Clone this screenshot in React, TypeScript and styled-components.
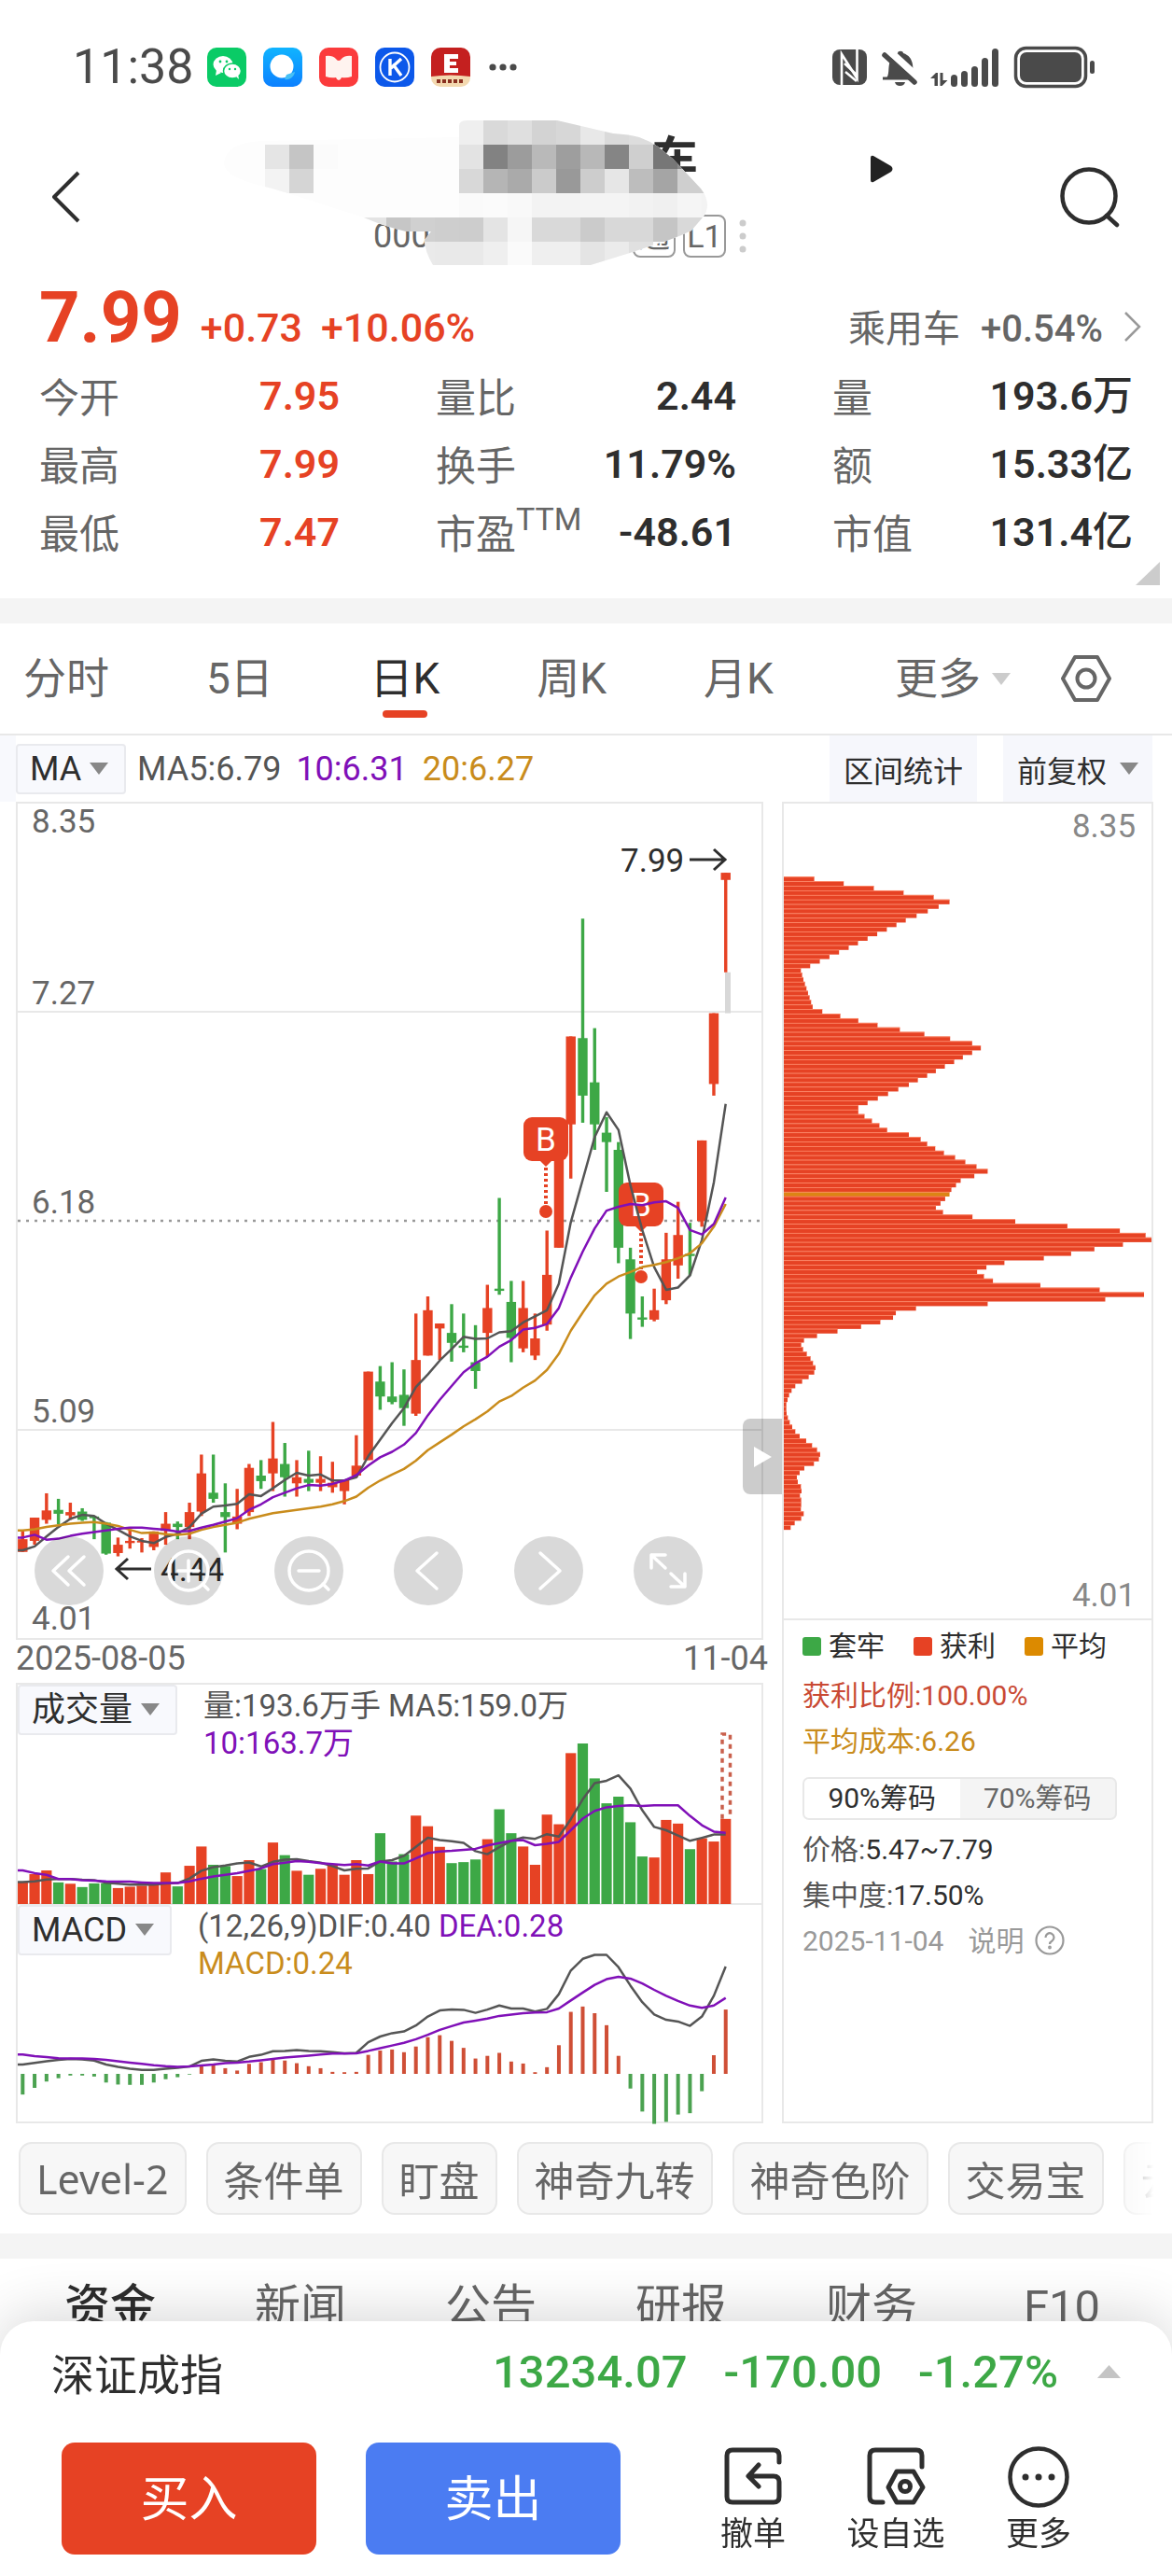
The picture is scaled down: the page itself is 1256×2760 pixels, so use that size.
import React from "react";
import styled, { createGlobalStyle, css } from "styled-components";

const RED = "#e64224";
const GREEN = "#3da846";
const PURPLE = "#8010b8";
const GOLD = "#c98c1c";
const INK = "#2e2e2e";
const GREY = "#666666";
const LINE = "#e8e8e8";
const DARK_LINE = "#555555";

const UI = `Roboto, "Noto Sans CJK SC", sans-serif`;

const GlobalStyle = createGlobalStyle`
  * { box-sizing: border-box; }
  body { margin: 0; background: #ffffff; color: ${INK}; font-family: ${UI}; }
  button, select { font: inherit; color: inherit; border: 0; background: none; padding: 0; margin: 0; }
  svg { display: block; flex: none; }
  a { color: inherit; text-decoration: none; }
`;

/* ---------- data ---------- */

type Candle = [up: 0 | 1, high: number, top: number, bottom: number, low: number];

/* Levels count down from the top of the price plot; 1512 levels span 8.35 to 4.01. */
const LEVELS = 1512;
const candles: Candle[] = [
  [1, 1315, 1330, 1353, 1353], [1, 1291, 1291, 1333, 1340], [1, 1247, 1278, 1295, 1302], [0, 1257, 1277, 1284, 1303],
  [1, 1264, 1281, 1287, 1295], [0, 1274, 1280, 1295, 1297], [0, 1289, 1289, 1292, 1330], [0, 1299, 1300, 1356, 1358],
  [1, 1327, 1340, 1355, 1361], [1, 1312, 1333, 1337, 1347], [1, 1328, 1333, 1336, 1354], [1, 1316, 1316, 1344, 1350],
  [1, 1281, 1302, 1315, 1340], [0, 1298, 1302, 1308, 1330], [1, 1264, 1281, 1308, 1330], [1, 1177, 1211, 1280, 1288],
  [0, 1177, 1246, 1257, 1264], [0, 1229, 1281, 1290, 1354], [1, 1239, 1289, 1302, 1312], [1, 1194, 1201, 1281, 1288],
  [0, 1187, 1215, 1225, 1239], [1, 1118, 1184, 1211, 1243], [0, 1156, 1194, 1218, 1253], [1, 1187, 1218, 1229, 1253],
  [0, 1170, 1221, 1228, 1243], [1, 1180, 1221, 1228, 1243], [1, 1190, 1228, 1236, 1246], [1, 1222, 1222, 1243, 1267],
  [1, 1142, 1197, 1215, 1218], [1, 1027, 1027, 1187, 1187], [0, 1017, 1045, 1072, 1096], [0, 1010, 1072, 1082, 1086],
  [0, 1023, 1069, 1093, 1125], [1, 922, 1006, 1103, 1107], [1, 891, 916, 998, 998], [1, 940, 940, 949, 1006],
  [0, 905, 957, 975, 1009], [0, 922, 980, 984, 992], [0, 943, 1010, 1026, 1058], [1, 870, 912, 957, 1000],
  [0, 713, 877, 881, 888], [0, 863, 901, 966, 1010], [1, 863, 912, 985, 992], [1, 922, 967, 998, 1006],
  [1, 772, 852, 942, 953], [1, 640, 640, 803, 803], [1, 421, 421, 580, 678], [0, 208, 424, 528, 577],
  [0, 406, 504, 580, 626], [0, 567, 595, 612, 702], [0, 612, 626, 803, 831], [0, 803, 824, 922, 968],
  [0, 891, 929, 933, 946], [1, 877, 916, 933, 936], [1, 776, 824, 898, 905], [1, 720, 780, 835, 859],
  [0, 758, 814, 818, 853], [1, 609, 609, 755, 765], [1, 379, 379, 507, 528], [1, 125, 125, 138, 305],
];
const ma5 = [1350, 1343, 1325, 1308, 1293, 1286, 1288, 1302, 1313, 1325, 1333, 1337, 1326, 1320, 1308, 1284, 1271, 1269, 1266, 1249, 1252, 1238, 1223, 1210, 1215, 1213, 1224, 1224, 1218, 1180, 1150, 1120, 1093, 1055, 1032, 1007, 986, 964, 968, 967, 956, 954, 938, 927, 916, 868, 757, 680, 603, 558, 590, 690, 771, 838, 879, 875, 853, 789, 685, 543];
const ma10 = [1327, 1322, 1331, 1329, 1324, 1320, 1317, 1314, 1311, 1309, 1309, 1311, 1313, 1316, 1315, 1309, 1304, 1298, 1292, 1277, 1267, 1254, 1246, 1238, 1232, 1233, 1230, 1224, 1214, 1197, 1182, 1172, 1159, 1138, 1106, 1078, 1053, 1028, 1012, 1000, 982, 970, 951, 948, 941, 912, 857, 810, 768, 736, 729, 724, 726, 721, 719, 731, 771, 779, 760, 712];
const ma20 = [1314, 1312, 1308, 1305, 1302, 1300, 1299, 1302, 1306, 1313, 1319, 1318, 1321, 1322, 1320, 1313, 1308, 1304, 1300, 1293, 1288, 1283, 1280, 1277, 1274, 1271, 1267, 1261, 1253, 1237, 1224, 1213, 1203, 1188, 1169, 1155, 1141, 1126, 1113, 1099, 1081, 1071, 1056, 1043, 1024, 995, 953, 920, 889, 868, 855, 847, 838, 834, 829, 822, 813, 795, 765, 724];

/* Volume panel: 660 levels from its top to the base line. */
const VOLUME_LEVELS = 660;
const volumes = [67, 90, 101, 65, 61, 51, 62, 62, 48, 52, 55, 58, 95, 53, 115, 173, 118, 114, 84, 132, 105, 185, 147, 100, 88, 106, 118, 88, 132, 90, 213, 128, 150, 266, 234, 172, 123, 126, 134, 195, 285, 213, 173, 118, 269, 240, 454, 483, 378, 303, 323, 246, 143, 140, 253, 242, 165, 198, 188, 256];
const volMa5 = [66, 68, 74, 75, 75, 73, 72, 64, 61, 58, 58, 58, 62, 63, 77, 100, 111, 116, 122, 125, 113, 127, 133, 135, 129, 124, 114, 101, 106, 107, 128, 132, 145, 172, 199, 192, 189, 184, 159, 150, 171, 190, 200, 196, 210, 203, 255, 315, 364, 371, 387, 347, 282, 232, 222, 206, 190, 199, 209, 209];
const volMa10 = [101, 93, 88, 75, 75, 72, 70, 68, 67, 67, 65, 63, 63, 63, 68, 76, 83, 88, 93, 100, 107, 120, 124, 129, 127, 123, 120, 117, 120, 116, 128, 122, 122, 137, 153, 158, 160, 163, 166, 176, 183, 190, 192, 177, 181, 187, 222, 257, 280, 291, 295, 297, 295, 297, 297, 297, 265, 237, 218, 214];

/* MACD panel: offsets from the zero line, up is positive. */
const macd = [-62, -42, -23, -13, -5, -5, -8, -26, -32, -33, -33, -26, -16, -10, -2, 25, 28, 17, 10, 30, 35, 44, 40, 32, 23, 17, 6, 5, 6, 57, 70, 73, 65, 82, 110, 116, 99, 78, 46, 54, 63, 37, 31, 5, 20, 86, 186, 202, 182, 146, 54, -44, -113, -150, -144, -122, -118, -52, 56, 193];
const dif = [28, 33, 38, 42, 45, 43, 40, 28, 21, 15, 12, 12, 15, 18, 22, 39, 43, 39, 37, 51, 57, 68, 69, 71, 69, 68, 65, 62, 63, 95, 112, 122, 127, 145, 172, 190, 193, 192, 183, 193, 205, 196, 196, 187, 195, 239, 310, 345, 357, 357, 320, 265, 215, 178, 162, 157, 144, 172, 234, 322];
const dea = [58, 53, 50, 47, 46, 46, 45, 42, 38, 34, 30, 26, 23, 21, 22, 25, 28, 32, 34, 37, 41, 45, 49, 52, 55, 58, 61, 61, 62, 69, 77, 85, 93, 104, 117, 132, 143, 154, 160, 166, 174, 178, 182, 184, 185, 196, 220, 244, 267, 284, 291, 286, 271, 252, 234, 219, 205, 198, 205, 228];

/* Width of every price step in the cost distribution, from high to low price. */
const chips = [98, 193, 290, 386, 483, 534, 499, 464, 428, 393, 363, 332, 301, 270, 239, 209, 178, 147, 116, 85, 55, 59, 63, 68, 73, 78, 83, 88, 93, 124, 182, 240, 302, 374, 453, 536, 607, 635, 607, 577, 549, 519, 490, 462, 432, 403, 369, 336, 303, 270, 240, 240, 260, 284, 308, 333, 403, 441, 462, 488, 516, 552, 585, 621, 657, 614, 570, 555, 540, 534, 520, 505, 490, 513, 608, 746, 914, 1083, 1166, 1185, 1093, 1001, 926, 838, 711, 653, 623, 645, 674, 827, 1018, 1161, 1036, 657, 426, 361, 352, 311, 249, 173, 107, 65, 56, 62, 74, 86, 94, 102, 98, 80, 59, 37, 25, 17, 12, 8, 8, 9, 13, 19, 27, 37, 51, 72, 91, 107, 117, 113, 97, 66, 51, 42, 45, 55, 57, 52, 56, 56, 55, 64, 56, 35, 22];
const AVERAGE_STEP = 69;

const STEP = 12.77;
const cx = (i: number) => 5.3 + i * STEP;
const path = (values: number[], y: (v: number) => number) =>
  `M0 ${y(values[0]).toFixed(1)} ` + values.map((v, i) => `L${cx(i).toFixed(1)} ${y(v).toFixed(1)}`).join(" ");

/* ---------- page frame ---------- */

const Page = styled.div`
  min-height: 100vh;
  padding-bottom: 240px;
  overflow: hidden;
  background: #fff;
`;

const StatusBar = styled.header`
  height: 144px;
  padding: 0 82px 0 78px;
  display: flex;
  align-items: center;
  justify-content: space-between;
  color: #4a4a4a;
`;
const StatusGroup = styled.div`
  display: flex;
  align-items: center;
  gap: 14px;
`;
const Clock = styled.span`
  font-size: 52px;
  line-height: 60px;
`;

const Header = styled.div`
  position: relative;
  height: 134px;
  padding: 0 56px;
  display: flex;
  align-items: center;
`;
const IconButton = styled.button`
  display: flex;
`;
const TitleBlock = styled.div`
  flex: 1;
  display: flex;
  flex-direction: column;
  gap: 34px;
`;
const TitleRow = styled.h1`
  margin: 0;
  padding: 0 176px 0 612px;
  display: flex;
  align-items: flex-end;
  justify-content: space-between;
  font-size: 50px;
  line-height: 50px;
  font-weight: 700;
`;
const CodeRow = styled.div`
  padding-left: 314px;
  display: flex;
  align-items: center;
  font-size: 36px;
  line-height: 46px;
  color: ${GREY};
`;
const Code = styled.span`
  width: 278px;
`;
const Tag = styled.span`
  height: 46px;
  width: 46px;
  margin-right: 8px;
  border: 2px solid #999;
  border-radius: 8px;
  font-size: 34px;
  line-height: 42px;
  text-align: center;
`;
const Mosaic = styled.svg`
  position: absolute;
  left: 230px;
  top: -19px;
`;

/* ---------- quote ---------- */

const Quote = styled.section`
  position: relative;
  padding: 14px 42px 34px;
`;
const PriceRow = styled.div`
  display: flex;
  align-items: baseline;
  height: 96px;
  line-height: 96px;
  margin-right: -10px;
  color: ${RED};
`;
const Price = styled.strong`
  font-size: 76px;
  margin-right: 20px;
`;
const Change = styled.span`
  font-size: 43px;
  font-weight: 500;
  margin-right: 20px;
`;
const Sector = styled.a`
  margin-left: auto;
  display: flex;
  align-items: baseline;
  gap: 22px;
  color: ${GREY};
  font-size: 40px;
`;
const SectorChange = styled.span`
  font-weight: 500;
`;
const QuoteGrid = styled.dl`
  margin: 0;
  display: grid;
  grid-template-columns: repeat(3, 1fr);
  column-gap: 103px;
`;
const QuoteItem = styled.div`
  display: flex;
  justify-content: space-between;
  align-items: center;
  height: 73px;
  font-size: 43px;
  white-space: nowrap;
`;
const Term = styled.dt`
  display: flex;
  padding-bottom: 4px;
  color: ${GREY};
`;
const Super = styled.span`
  font-size: 34px;
  line-height: 36px;
`;
const Value = styled.dd<{ $color?: string }>`
  margin: 0;
  font-size: 43px;
  line-height: 73px;
  font-weight: 600;
  color: ${(p) => p.$color ?? INK};
`;
const Unit = styled.span`
  font-weight: 500;
`;
const Corner = styled.svg`
  position: absolute;
  right: 13px;
  bottom: 14px;
`;
const Band = styled.div`
  height: 27px;
  background: #f4f4f4;
`;

/* ---------- period tabs ---------- */

const Periods = styled.nav`
  height: 120px;
  padding: 0 65px 0 25px;
  display: flex;
  align-items: center;
  border-bottom: 2px solid ${LINE};
  color: ${GREY};
`;
const PeriodList = styled.div`
  flex: 0 1 804px;
  display: flex;
  justify-content: space-between;
`;
const Period = styled.button<{ $active?: boolean }>`
  position: relative;
  font-size: 46px;
  line-height: 60px;
  ${(p) =>
    p.$active &&
    css`
      color: ${INK};
      &::after {
        content: "";
        position: absolute;
        left: 50%;
        bottom: -12px;
        width: 48px;
        height: 8px;
        margin-left: -24px;
        border-radius: 4px;
        background: ${RED};
      }
    `}
`;
const MoreButton = styled.button`
  margin-left: auto;
  margin-right: 54px;
  display: flex;
  align-items: center;
  gap: 12px;
  font-size: 46px;
  line-height: 60px;
`;

/* ---------- indicator bar ---------- */

const Picker = styled.label`
  position: relative;
  display: inline-flex;
  align-items: center;
  height: 54px;
  border: 2px solid #e9eaee;
  border-radius: 4px;
  background: #f8f9fd;
  &::after {
    content: "";
    position: absolute;
    right: 17px;
    top: 18px;
    border: 10px solid transparent;
    border-top: 13px solid #888;
    border-bottom: 0;
    pointer-events: none;
  }
`;
const PickerSelect = styled.select`
  appearance: none;
  padding: 0 45px 0 13px;
  font-size: 36px;
  line-height: 50px;
  height: 50px;
`;
const IndicatorBar = styled.div`
  height: 71px;
  padding: 0 21px 0 0;
  display: flex;
  align-items: center;
  &::before {
    content: "";
    width: 17px;
    height: 71px;
    background: #f8f9fd;
  }
`;
const Readout = styled.div`
  font-size: 36px;
  line-height: 46px;
  margin-left: 12px;
  display: flex;
  gap: 16px;
`;
const Tone = styled.span<{ $color: string }>`
  color: ${(p) => p.$color};
`;
const BarButton = styled.button<{ $push?: boolean }>`
  height: 71px;
  padding: 0 15px;
  margin-left: ${(p) => (p.$push ? "auto" : "28px")};
  background: #f6f7fc;
  font-size: 32px;
  display: flex;
  align-items: center;
  gap: 14px;
`;

/* ---------- charts ---------- */

const Charts = styled.main`
  position: relative;
  display: grid;
  grid-template-columns: 801fr 398fr;
  column-gap: 20px;
  padding: 0 20px 0 17px;
`;
const Column = styled.div`
  min-width: 0;
`;
const PlotBox = styled.div`
  position: relative;
  border: 2px solid ${LINE};
`;
const Plot = styled.svg`
  width: 100%;
  height: auto;
  font-family: ${UI};
`;
const DateRow = styled.div`
  height: 46px;
  display: flex;
  justify-content: space-between;
  margin-right: -5px;
  font-size: 36px;
  line-height: 40px;
  color: ${GREY};
`;
const SubPanel = styled.section`
  display: grid;
  height: 236px;
  border: 2px solid ${LINE};
  border-bottom: 0;
  & > * {
    grid-area: 1 / 1;
  }
  & + & {
    border-bottom: 2px solid ${LINE};
  }
`;
const SubHead = styled.div`
  display: flex;
  align-items: flex-start;
  gap: 28px;
`;
const SubReadout = styled.div`
  padding-top: 3px;
  font-size: 33px;
  line-height: 40px;
`;
const FloatTools = styled.div`
  position: absolute;
  left: 18px;
  right: 63px;
  bottom: 35px;
  display: flex;
  justify-content: space-between;
`;
const FloatButton = styled.button`
  width: 74px;
  height: 74px;
  border-radius: 37px;
  background: rgba(0, 0, 0, 0.15);
  display: flex;
  align-items: center;
  justify-content: center;
`;
const CollapseButton = styled.button`
  position: absolute;
  right: -22px;
  top: 659px;
  width: 42px;
  height: 81px;
  border-radius: 8px 0 0 8px;
  background: rgba(0, 0, 0, 0.2);
  display: flex;
  align-items: center;
  justify-content: center;
`;

const ChipPanel = styled.aside`
  border: 2px solid ${LINE};
  display: flex;
  flex-direction: column;
`;
const ChipInfo = styled.div`
  border-top: 2px solid ${LINE};
  padding: 0 20px;
  font-size: 30px;
  line-height: 49px;
`;
const Legend = styled.ul`
  list-style: none;
  margin: 0;
  padding: 0;
  display: flex;
  gap: 31px;
  line-height: 56px;
`;
const LegendItem = styled.li<{ $color: string }>`
  display: flex;
  align-items: center;
  gap: 8px;
  &::before {
    content: "";
    width: 20px;
    height: 20px;
    border-radius: 3px;
    background: ${(p) => p.$color};
  }
`;
const Line = styled.div<{ $color?: string }>`
  color: ${(p) => p.$color ?? INK};
  display: flex;
  align-items: center;
`;
const Toggle = styled.div`
  display: flex;
  width: 337px;
  max-width: 100%;
  height: 46px;
  margin: 14px 0 7px;
  border: 2px solid ${LINE};
  border-radius: 7px;
  overflow: hidden;
  background: #f4f4f4;
`;
const ToggleButton = styled.button<{ $active?: boolean }>`
  flex: 1;
  line-height: 42px;
  background: ${(p) => (p.$active ? "#fff" : "transparent")};
  color: ${(p) => (p.$active ? INK : GREY)};
`;
const HelpButton = styled.button`
  display: flex;
  align-items: center;
  gap: 12px;
  margin-left: 26px;
`;

/* ---------- shortcuts, tabs, sheet ---------- */

const Shortcuts = styled.div`
  display: flex;
  gap: 21px;
  margin: 20px;
  overflow: hidden;
  mask-image: linear-gradient(to right, #000 calc(100% - 50px), transparent);
`;
const Shortcut = styled.button`
  flex: none;
  height: 78px;
  padding: 0 17px;
  border: 2px solid ${LINE};
  border-radius: 14px;
  background: #f7f7f7;
  color: ${GREY};
  font-family: "Noto Sans", "Noto Sans CJK SC", sans-serif;
  font-size: 43px;
`;
const InfoTabs = styled.nav`
  display: grid;
  grid-template-columns: repeat(6, 1fr);
  padding: 16px 16px 0;
`;
const InfoTab = styled.button<{ $active?: boolean }>`
  font-size: 49px;
  line-height: 72px;
  color: ${(p) => (p.$active ? INK : GREY)};
  font-weight: ${(p) => (p.$active ? 500 : 400)};
`;
const Sheet = styled.footer`
  position: fixed;
  left: 0;
  right: 0;
  bottom: 0;
  padding-bottom: 23px;
  border-radius: 36px 36px 0 0;
  background: #fff;
  box-shadow: 0 -6px 60px rgba(0, 0, 0, 0.16);
`;
const IndexRow = styled.a`
  height: 108px;
  padding: 0 55px;
  display: flex;
  align-items: center;
  font-size: 46px;
`;
const IndexNumbers = styled.span`
  margin-left: auto;
  margin-right: 42px;
  display: flex;
  gap: 39px;
  color: ${GREEN};
  font-size: 49px;
  font-weight: 500;
`;
const Actions = styled.div`
  margin-top: 22px;
  padding: 0 108px 0 66px;
  display: flex;
  align-items: center;
`;
const Trade = styled.button<{ $color: string }>`
  flex: 0 1 273px;
  height: 120px;
  margin-right: 53px;
  padding-top: 4px;
  border-radius: 14px;
  background: ${(p) => p.$color};
  color: #fff;
  font-size: 52px;
  line-height: 60px;
`;
const SmallActions = styled.div`
  flex: 1;
  display: flex;
  justify-content: space-between;
  padding-left: 54px;
`;
const SmallAction = styled.button`
  display: flex;
  flex-direction: column;
  align-items: center;
  justify-content: space-between;
  height: 120px;
  padding: 4px 0 0;
  font-size: 35px;
  line-height: 42px;
`;

/* ---------- icons ---------- */

const AppIcons = () => (
  <svg width="332" height="42" viewBox="0 0 332 42" aria-hidden="true">
    <defs>
      <linearGradient id="msg" x1="0" y1="0" x2="0" y2="1">
        <stop offset="0" stopColor="#10b4ff" />
        <stop offset="1" stopColor="#0c80ff" />
      </linearGradient>
    </defs>
    <rect width="42" height="42" rx="10" fill="#0acb66" />
    <ellipse cx="17" cy="18" rx="10.5" ry="9" fill="#fff" />
    <path d="M10 24l-1 6 6-3z" fill="#fff" />
    <ellipse cx="27" cy="25" rx="9.5" ry="8" fill="#fff" stroke="#0acb66" strokeWidth="1.5" />
    <path d="M31 31l3 3-1-6z" fill="#fff" />
    <circle cx="14" cy="15" r="1.4" fill="#0acb66" />
    <circle cx="21" cy="15" r="1.4" fill="#0acb66" />
    <circle cx="24" cy="23" r="1.2" fill="#0acb66" />
    <circle cx="30" cy="23" r="1.2" fill="#0acb66" />
    <rect x="60" width="42" height="42" rx="10" fill="url(#msg)" />
    <circle cx="80" cy="20" r="12.5" fill="#fff" />
    <path d="M83 34c6 1 10-3 11-8l-9 3z" fill="#47c0f5" />
    <rect x="120" width="42" height="42" rx="10" fill="#fb3b3c" />
    <path d="M127 9q7-1 11 3 1 2 3 2t3-2q4-4 11-3v22q-6 2-11 1-1 3-3 3t-3-3q-5 1-11-1z" fill="#fff3ef" />
    <rect x="180" width="42" height="42" rx="10" fill="#0c58ea" />
    <circle cx="201" cy="21" r="15.5" fill="none" stroke="#fff" strokeWidth="1.8" />
    <path d="M196 12v18M208 12l-11 10 3-3 8 11" fill="none" stroke="#fff" strokeWidth="3.4" />
    <path d="M240 10a10 10 0 0 1 10-10h22a10 10 0 0 1 10 10v22h-42z" fill="#c4201f" />
    <path d="M240 31q21-3 42 0v1a10 10 0 0 1-10 10h-22a10 10 0 0 1-10-10z" fill="#f3d9b0" />
    <path d="M254 7h15v5h-9v3h7v4h-7v3h9v5h-15z" fill="#fff" />
    <path d="M246 36h30" stroke="#8a3020" strokeWidth="4" strokeDasharray="4 2" />
    <g fill="#4a4a4a">
      <circle cx="306" cy="21" r="3.6" />
      <circle cx="317" cy="21" r="3.6" />
      <circle cx="328" cy="21" r="3.6" />
    </g>
  </svg>
);

const SystemIcons = () => (
  <svg width="282" height="46" viewBox="0 0 282 46" aria-hidden="true" fill="#4a4a4a">
    <rect x="0" y="4" width="37" height="38" rx="8" />
    <path d="M10 42V9l16.500 26V4" fill="none" stroke="#fff" strokeWidth="2.6" />
    <path d="M14 28l12 10M13 19l13 12" stroke="#fff" strokeWidth="2.4" />
    <path d="M57 36c5-5 2-12 5-20 2-5 5-7 8-8 0-3 6-3 6 0 6 2 9 6 10 12 1 8 0 12 4 16z" />
    <path d="M58 3l36 33" stroke="#fff" strokeWidth="8" />
    <path d="M56 10l32 29" stroke="#4a4a4a" strokeWidth="5.500" strokeLinecap="round" />
    <path d="M54 33.500h30v3H54zM67 39h11q-1 4-5.500 4T67 39z" />
    <path d="M105 35l6-6h2v14h-3.500V35zM115.500 29h3v8h5l-6 6h-2z" />
    <rect x="127" y="31" width="7" height="13" rx="3.500" />
    <rect x="138" y="27" width="7" height="17" rx="3.500" />
    <rect x="149" y="22" width="7" height="22" rx="3.500" />
    <rect x="160" y="13" width="7" height="31" rx="3.500" />
    <rect x="171" y="3" width="7" height="41" rx="3.500" />
    <rect x="196.500" y="2.500" width="75" height="41" rx="11" fill="none" stroke="#4a4a4a" strokeWidth="3.500" />
    <rect x="201" y="7" width="66" height="32" rx="7" />
    <rect x="276" y="16" width="5" height="14" rx="2.500" />
  </svg>
);

const Tri = ({ w, h, color, up }: { w: number; h: number; color: string; up?: boolean }) => (
  <svg width={w} height={h} viewBox="0 0 10 10" preserveAspectRatio="none" aria-hidden="true">
    <path d={up ? "M0 10h10L5 0z" : "M0 0h10L5 10z"} fill={color} />
  </svg>
);

type Cell = [col: number, row: number, shade: string];
const cells: Cell[] = [
  [10, 0, "#efefef"], [11, 0, "#d9d9d9"], [12, 0, "#dfdfdf"], [13, 0, "#d3d3d3"], [14, 0, "#d7d7d7"], [15, 0, "#e8e8e8"], [16, 0, "#dadada"], [17, 0, "#dddddd"], [18, 0, "#d2d2d2"],
  [2, 1, "#e5e5e5"], [3, 1, "#c5c5c5"], [4, 1, "#fbfbfb"],
  [10, 1, "#e3e3e3"], [11, 1, "#828282"], [12, 1, "#9c9c9c"], [13, 1, "#b9b9b9"], [14, 1, "#9e9e9e"], [15, 1, "#b8b8b8"], [16, 1, "#858585"], [17, 1, "#cfcfcf"], [18, 1, "#777777"], [19, 1, "#8a8a8a"],
  [2, 2, "#f3f3f3"], [3, 2, "#d5d5d5"], [4, 2, "#fdfdfd"],
  [10, 2, "#d8d8d8"], [11, 2, "#b5b5b5"], [12, 2, "#aaaaaa"], [13, 2, "#cbcbcb"], [14, 2, "#999999"], [15, 2, "#cdcdcd"], [16, 2, "#e6e6e6"], [17, 2, "#bdbdbd"], [18, 2, "#a5a5a5"], [19, 2, "#cfcfcf"], [20, 2, "#cfcfcf"],
  [10, 3, "#fafafa"], [11, 3, "#fbfbfb"], [12, 3, "#f9f9f9"], [13, 3, "#f3f3f3"], [14, 3, "#f3f3f3"], [15, 3, "#f4f4f4"], [16, 3, "#f4f4f4"], [17, 3, "#f2f2f2"], [18, 3, "#f0f0f0"], [19, 3, "#f5f5f5"], [20, 3, "#f3f3f3"],
  [6, 4, "#e4e4e4"], [7, 4, "#c6c6c6"], [8, 4, "#d0d0d0"], [9, 4, "#cecece"], [10, 4, "#cdcdcd"], [11, 4, "#e4e4e4"], [12, 4, "#f6f6f6"], [13, 4, "#d9d9d9"], [14, 4, "#d9d9d9"], [15, 4, "#cbcbcb"], [16, 4, "#d8d8d8"], [17, 4, "#d8d8d8"], [18, 4, "#c5c5c5"], [19, 4, "#d9d9d9"], [20, 4, "#e0e0e0"],
  [8, 5, "#eaeaea"], [9, 5, "#e9e9e9"], [10, 5, "#e9e9e9"], [11, 5, "#efefef"], [12, 5, "#fafafa"], [13, 5, "#efefef"], [14, 5, "#efefef"], [15, 5, "#e4e4e4"], [16, 5, "#ebebeb"], [17, 5, "#e0e0e0"],
];

const TitleMask = () => (
  <Mosaic width="540" height="170" viewBox="0 0 540 170" aria-hidden="true">
    <defs>
      <clipPath id="blob">
        <path d="M262 10Q262 4 270 4H367L427 18Q445 19 455 22 466 26 475 32L491 45 507 62 521 77Q528 86 528 95 528 102 523 108L511 122Q495 130 475 136L445 146 403 159H234Q225 144 225 132L232 123H205Q180 117 160 108 140 102 110 92L62 77Q10 66 10 50 12 28 50 26L262 22z" />
      </clipPath>
    </defs>
    <g clipPath="url(#blob)">
      <rect width="540" height="170" fill="#fdfdfd" />
      {cells.map(([c, r, shade]) => (
        <rect key={`${c}-${r}`} x={2 + c * 26} y={4 + r * 26} width="26" height="26" fill={shade} shapeRendering="crispEdges" />
      ))}
    </g>
  </Mosaic>
);

/* ---------- chart drawings ---------- */

const py = (v: number) => (v / LEVELS) * 896;

const TradeMark = ({ x, y }: { x: number; y: number }) => (
  <g>
    <path d={`M${x - 7} ${y + 46}h14l-7 7z`} fill={RED} />
    <rect x={x - 24} y={y} width="48" height="47" rx="9" fill={RED} />
    <text x={x} y={y + 36} textAnchor="middle" fontSize="35" fill="#fff">B</text>
    <path d={`M${x} ${y + 54}v40`} stroke={RED} strokeWidth="4" strokeDasharray="3 3" />
    <circle cx={x} cy={y + 101} r="7" fill={RED} />
  </g>
);

const PricePlot = () => (
  <Plot viewBox="0 0 797 894" role="img" aria-label="日K">
    <path d="M0 223H797M0 671H797" stroke={LINE} strokeWidth="2" />
    <path d="M0 447H797" stroke="#999" strokeWidth="2.500" strokeDasharray="3 6" />
    <g fontSize="35" fill={GREY}>
      <text x="15" y="31">8.35</text>
      <text x="15" y="215">7.27</text>
      <text x="15" y="439">6.18</text>
      <text x="15" y="663">5.09</text>
      <text x="15" y="885">4.01</text>
    </g>
    <rect x="758" y={py(305)} width="6" height={py(74)} fill="#d8d8d8" />
    {candles.map(([up, high, top, bottom, low], i) => (
      <g key={i} fill={up ? RED : GREEN}>
        <rect x={cx(i) - 1.7} y={py(high)} width="3.4" height={py(low - high)} />
        <rect x={cx(i) - 5.2} y={py(top)} width="10.4" height={py(bottom - top)} />
      </g>
    ))}
    <TradeMark x={566} y={336} />
    <TradeMark x={668} y={406} />
    <g fill="none" strokeWidth="2.500" strokeLinejoin="round">
      <path d={path(ma5, py)} stroke={DARK_LINE} />
      <path d={path(ma20, py)} stroke={GOLD} />
      <path d={path(ma10, py)} stroke={PURPLE} />
    </g>
    <g fill="none" stroke={INK} strokeWidth="3">
      <path d="M720 60h37M746 49l12 11-12 11" />
      <path d="M143 820h-37M118 809l-12 11 12 11" />
    </g>
    <g fontSize="35" fill={INK}>
      <text x="646" y="73">7.99</text>
      <text x="153" y="833">4.44</text>
    </g>
  </Plot>
);

const vy = (v: number) => 235 - (v / VOLUME_LEVELS) * 235;

const VolumePlot = () => (
  <Plot viewBox="0 0 797 235" role="img" aria-label="成交量">
    {volumes.map((v, i) => (
      <rect key={i} x={cx(i) - 5.6} y={vy(v)} width="11.2" height={235 - vy(v)} fill={candles[i][0] ? RED : GREEN} />
    ))}
    <path d={`M755 ${vy(256)}V53h8.500V${vy(256)}`} fill="none" stroke="#c9604c" strokeWidth="3.500" strokeDasharray="5 5" />
    <g fill="none" strokeWidth="2.500" strokeLinejoin="round">
      <path d={path(volMa5, vy)} stroke={DARK_LINE} />
      <path d={path(volMa10, vy)} stroke={PURPLE} />
    </g>
  </Plot>
);

const my = (v: number) => 181 - v / 2.8;

const MacdPlot = () => (
  <Plot viewBox="0 0 797 235" role="img" aria-label="MACD">
    {macd.map((v, i) => (
      <rect key={i} x={cx(i) - 2} y={Math.min(181, my(v))} width="4" height={Math.abs(v) / 2.8} fill={v > 0 ? "#cf4f36" : "#4ba250"} />
    ))}
    <g fill="none" strokeWidth="2.500" strokeLinejoin="round">
      <path d={path(dif, my)} stroke={DARK_LINE} />
      <path d={path(dea, my)} stroke={PURPLE} />
    </g>
  </Plot>
);

const ROW = 4.905;

const ChipPlot = () => (
  <Plot viewBox="0 0 395 875" role="img" aria-label="筹码分布">
    {chips.map((w, i) => (
      <rect key={i} x="0" y={78.500 + i * ROW} width={w / 3} height={ROW + 0.2} fill={i === AVERAGE_STEP ? "#dc8414" : RED} />
    ))}
    {chips.map((w, i) => (
      <rect key={i} x="0" y={78.500 + i * ROW} width={w / 3} height="0.8" fill="#ff9070" />
    ))}
    <g fontSize="35" fill="#888">
      <text x="378" y="36" textAnchor="end">8.35</text>
      <text x="378" y="862" textAnchor="end">4.01</text>
    </g>
  </Plot>
);

/* ---------- page ---------- */

type Row = { label: string; sup?: string; value: string; unit?: string; color?: string };
const quotes: Row[] = [
  { label: "今开", value: "7.95", color: RED },
  { label: "量比", value: "2.44" },
  { label: "量", value: "193.6", unit: "万" },
  { label: "最高", value: "7.99", color: RED },
  { label: "换手", value: "11.79%" },
  { label: "额", value: "15.33", unit: "亿" },
  { label: "最低", value: "7.47", color: RED },
  { label: "市盈", sup: "TTM", value: "-48.61" },
  { label: "市值", value: "131.4", unit: "亿" },
];

const toolPaths: { name: string; d: string }[] = [
  { name: "最早", d: "M36 22L20 37l16 15M53 22L37 37l16 15" },
  { name: "放大", d: "M37 16a21 21 0 1 0 0 42a21 21 0 1 0 0-42M52 51l6 6M26 37h22M37 26v22" },
  { name: "缩小", d: "M37 16a21 21 0 1 0 0 42a21 21 0 1 0 0-42M52 51l6 6M26 37h22" },
  { name: "向左", d: "M46 18L25 37l21 19" },
  { name: "向右", d: "M28 18l21 19-21 19" },
  { name: "全屏", d: "M34 20H19v14M19 20l15 14M40 40l15 14M55 40v14H40" },
];

export default function App() {
  return (
    <Page>
      <GlobalStyle />
      <StatusBar>
        <StatusGroup>
          <Clock>11:38</Clock>
          <AppIcons />
        </StatusGroup>
        <SystemIcons />
      </StatusBar>

      <Header>
        <IconButton aria-label="返回">
          <svg width="30" height="56" viewBox="0 0 30 56" fill="none" stroke={INK} strokeWidth="4">
            <path d="M28 2L2 28l26 26" strokeLinejoin="round" />
          </svg>
        </IconButton>
        <TitleBlock>
          <TitleRow>
            <span>车</span>
            <svg width="26" height="30" viewBox="0 0 26 30" aria-hidden="true">
              <path d="M1 3q0-3 3-2l19 11q3 3 0 6L4 29q-3 1-3-2z" fill="#222" />
            </svg>
          </TitleRow>
          <CodeRow>
            <Code>000</Code>
            <Tag>通</Tag>
            <Tag>L1</Tag>
            <svg width="18" height="36" viewBox="0 0 18 36" fill="#ccc" aria-hidden="true">
              <circle cx="10" cy="4" r="3.500" />
              <circle cx="10" cy="18" r="3.500" />
              <circle cx="10" cy="32" r="3.500" />
            </svg>
          </CodeRow>
        </TitleBlock>
        <IconButton aria-label="搜索">
          <svg width="66" height="66" viewBox="0 0 66 66" fill="none" stroke={INK} strokeWidth="4.500">
            <circle cx="33" cy="32" r="28.500" />
            <path d="M52 53l11 10" strokeLinecap="round" />
          </svg>
        </IconButton>
        <TitleMask />
      </Header>

      <Quote>
        <PriceRow>
          <Price>7.99</Price>
          <Change>+0.73</Change>
          <Change>+10.06%</Change>
          <Sector href="#sector">
            <span>乘用车</span>
            <SectorChange>+0.54%</SectorChange>
            <svg width="20" height="32" viewBox="0 0 20 32" fill="none" stroke="#999" strokeWidth="2.500" aria-hidden="true">
              <path d="M2 1l15 15L2 31" />
            </svg>
          </Sector>
        </PriceRow>
        <QuoteGrid>
          {quotes.map((q) => (
            <QuoteItem key={q.label}>
              <Term>
                {q.label}
                {q.sup && <Super>{q.sup}</Super>}
              </Term>
              <Value $color={q.color}>
                {q.value}
                {q.unit && <Unit>{q.unit}</Unit>}
              </Value>
            </QuoteItem>
          ))}
        </QuoteGrid>
        <Corner width="26" height="25" viewBox="0 0 26 25" aria-hidden="true">
          <path d="M26 0v25H0z" fill="#ccc" />
        </Corner>
      </Quote>
      <Band />

      <Periods>
        <PeriodList>
          <Period>分时</Period>
          <Period>5日</Period>
          <Period $active>日K</Period>
          <Period>周K</Period>
          <Period>月K</Period>
        </PeriodList>
        <MoreButton>
          更多
          <Tri w={20} h={13} color="#ccc" />
        </MoreButton>
        <IconButton aria-label="设置">
          <svg width="54" height="52" viewBox="0 0 54 52" fill="none" stroke={GREY} strokeWidth="4">
            <path d="M15 3h24l13 23-13 23H15L2 26z" strokeLinejoin="round" />
            <circle cx="27" cy="26" r="9.500" />
          </svg>
        </IconButton>
      </Periods>

      <IndicatorBar>
        <Picker>
          <PickerSelect aria-label="主图指标">
            <option>MA</option>
          </PickerSelect>
        </Picker>
        <Readout>
          <Tone $color={DARK_LINE}>MA5:6.79</Tone>
          <Tone $color={PURPLE}>10:6.31</Tone>
          <Tone $color={GOLD}>20:6.27</Tone>
        </Readout>
        <BarButton $push>区间统计</BarButton>
        <BarButton>
          前复权
          <Tri w={20} h={13} color="#888" />
        </BarButton>
      </IndicatorBar>

      <Charts>
        <Column>
          <PlotBox>
            <PricePlot />
            <FloatTools>
              {toolPaths.map((t) => (
                <FloatButton key={t.name} aria-label={t.name}>
                  <svg width="74" height="74" viewBox="0 0 74 74" fill="none" stroke="#fff" strokeWidth="3.500" strokeLinecap="round" strokeLinejoin="round">
                    <path d={t.d} />
                  </svg>
                </FloatButton>
              ))}
            </FloatTools>
            <CollapseButton aria-label="收起筹码">
              <svg width="19" height="22" viewBox="0 0 19 22">
                <path d="M0 0l19 11L0 22z" fill="#fff" />
              </svg>
            </CollapseButton>
          </PlotBox>
          <DateRow>
            <span>2025-08-05</span>
            <span>11-04</span>
          </DateRow>
          <SubPanel>
            <VolumePlot />
            <SubHead>
              <Picker>
                <PickerSelect aria-label="副图一">
                  <option>成交量</option>
                </PickerSelect>
              </Picker>
              <SubReadout>
                <Tone $color={DARK_LINE}>量:193.6万手 MA5:159.0万</Tone>
                <br />
                <Tone $color={PURPLE}>10:163.7万</Tone>
              </SubReadout>
            </SubHead>
          </SubPanel>
          <SubPanel>
            <MacdPlot />
            <SubHead>
              <Picker>
                <PickerSelect aria-label="副图二">
                  <option>MACD</option>
                </PickerSelect>
              </Picker>
              <SubReadout>
                <Tone $color={DARK_LINE}>(12,26,9)DIF:0.40</Tone> <Tone $color={PURPLE}>DEA:0.28</Tone>
                <br />
                <Tone $color={GOLD}>MACD:0.24</Tone>
              </SubReadout>
            </SubHead>
          </SubPanel>
        </Column>

        <ChipPanel>
          <ChipPlot />
          <ChipInfo>
            <Legend>
              <LegendItem $color={GREEN}>套牢</LegendItem>
              <LegendItem $color={RED}>获利</LegendItem>
              <LegendItem $color="#dc8a00">平均</LegendItem>
            </Legend>
            <Line $color="#c94a34">获利比例:100.00%</Line>
            <Line $color={GOLD}>平均成本:6.26</Line>
            <Toggle>
              <ToggleButton $active>90%筹码</ToggleButton>
              <ToggleButton>70%筹码</ToggleButton>
            </Toggle>
            <Line>
              <Tone $color={DARK_LINE}>价格:</Tone>5.47~7.79
            </Line>
            <Line>
              <Tone $color={DARK_LINE}>集中度:</Tone>17.50%
            </Line>
            <Line $color="#999">
              2025-11-04
              <HelpButton>
                说明
                <svg width="32" height="32" viewBox="0 0 32 32" fill="none" stroke="#999" strokeWidth="2.200" aria-hidden="true">
                  <circle cx="16" cy="16" r="14.500" />
                  <path d="M11.500 13a4.500 4.500 0 1 1 7 3.500q-2.500 1.500-2.500 3.500" />
                  <circle cx="16" cy="23.500" r="0.800" />
                </svg>
              </HelpButton>
            </Line>
          </ChipInfo>
        </ChipPanel>
      </Charts>

      <Shortcuts>
        {["Level-2", "条件单", "盯盘", "神奇九转", "神奇色阶", "交易宝", "云"].map((s) => (
          <Shortcut key={s}>{s}</Shortcut>
        ))}
      </Shortcuts>
      <Band />

      <InfoTabs>
        {["资金", "新闻", "公告", "研报", "财务", "F10"].map((t, i) => (
          <InfoTab key={t} $active={i === 0}>{t}</InfoTab>
        ))}
      </InfoTabs>

      <Sheet>
        <IndexRow href="#index">
          深证成指
          <IndexNumbers>
            <span>13234.07</span>
            <span>-170.00</span>
            <span>-1.27%</span>
          </IndexNumbers>
          <Tri w={25} h={14} color="#c4c4c4" up />
        </IndexRow>
        <Actions>
          <Trade $color={RED}>买入</Trade>
          <Trade $color="#4b7cf2">卖出</Trade>
          <SmallActions>
            <SmallAction>
              <svg width="64" height="64" viewBox="0 0 64 64" fill="none" stroke={INK} strokeWidth="5" strokeLinecap="round" strokeLinejoin="round">
                <path d="M60 17V10q0-6-6-6H10q-6 0-6 6v44q0 6 6 6h44q6 0 6-6V38q0-6-6-6H28M38 20L27 32l11 11" />
              </svg>
              撤单
            </SmallAction>
            <SmallAction>
              <svg width="64" height="64" viewBox="0 0 64 64" fill="none" stroke={INK} strokeWidth="5" strokeLinecap="round" strokeLinejoin="round">
                <path d="M60 22V10q0-6-6-6H10q-6 0-6 6v44q0 6 6 6h8" />
                <path d="M33 27h18l10 17-10 16H33L24 44z" />
                <circle cx="42" cy="43" r="5.500" />
              </svg>
              设自选
            </SmallAction>
            <SmallAction>
              <svg width="68" height="66" viewBox="0 0 68 66" fill="none" stroke={INK} strokeWidth="4.500">
                <circle cx="34" cy="33" r="30.500" />
                <g fill={INK} stroke="none">
                  <circle cx="20" cy="33" r="3.500" />
                  <circle cx="34" cy="33" r="3.500" />
                  <circle cx="48" cy="33" r="3.500" />
                </g>
              </svg>
              更多
            </SmallAction>
          </SmallActions>
        </Actions>
      </Sheet>
    </Page>
  );
}
